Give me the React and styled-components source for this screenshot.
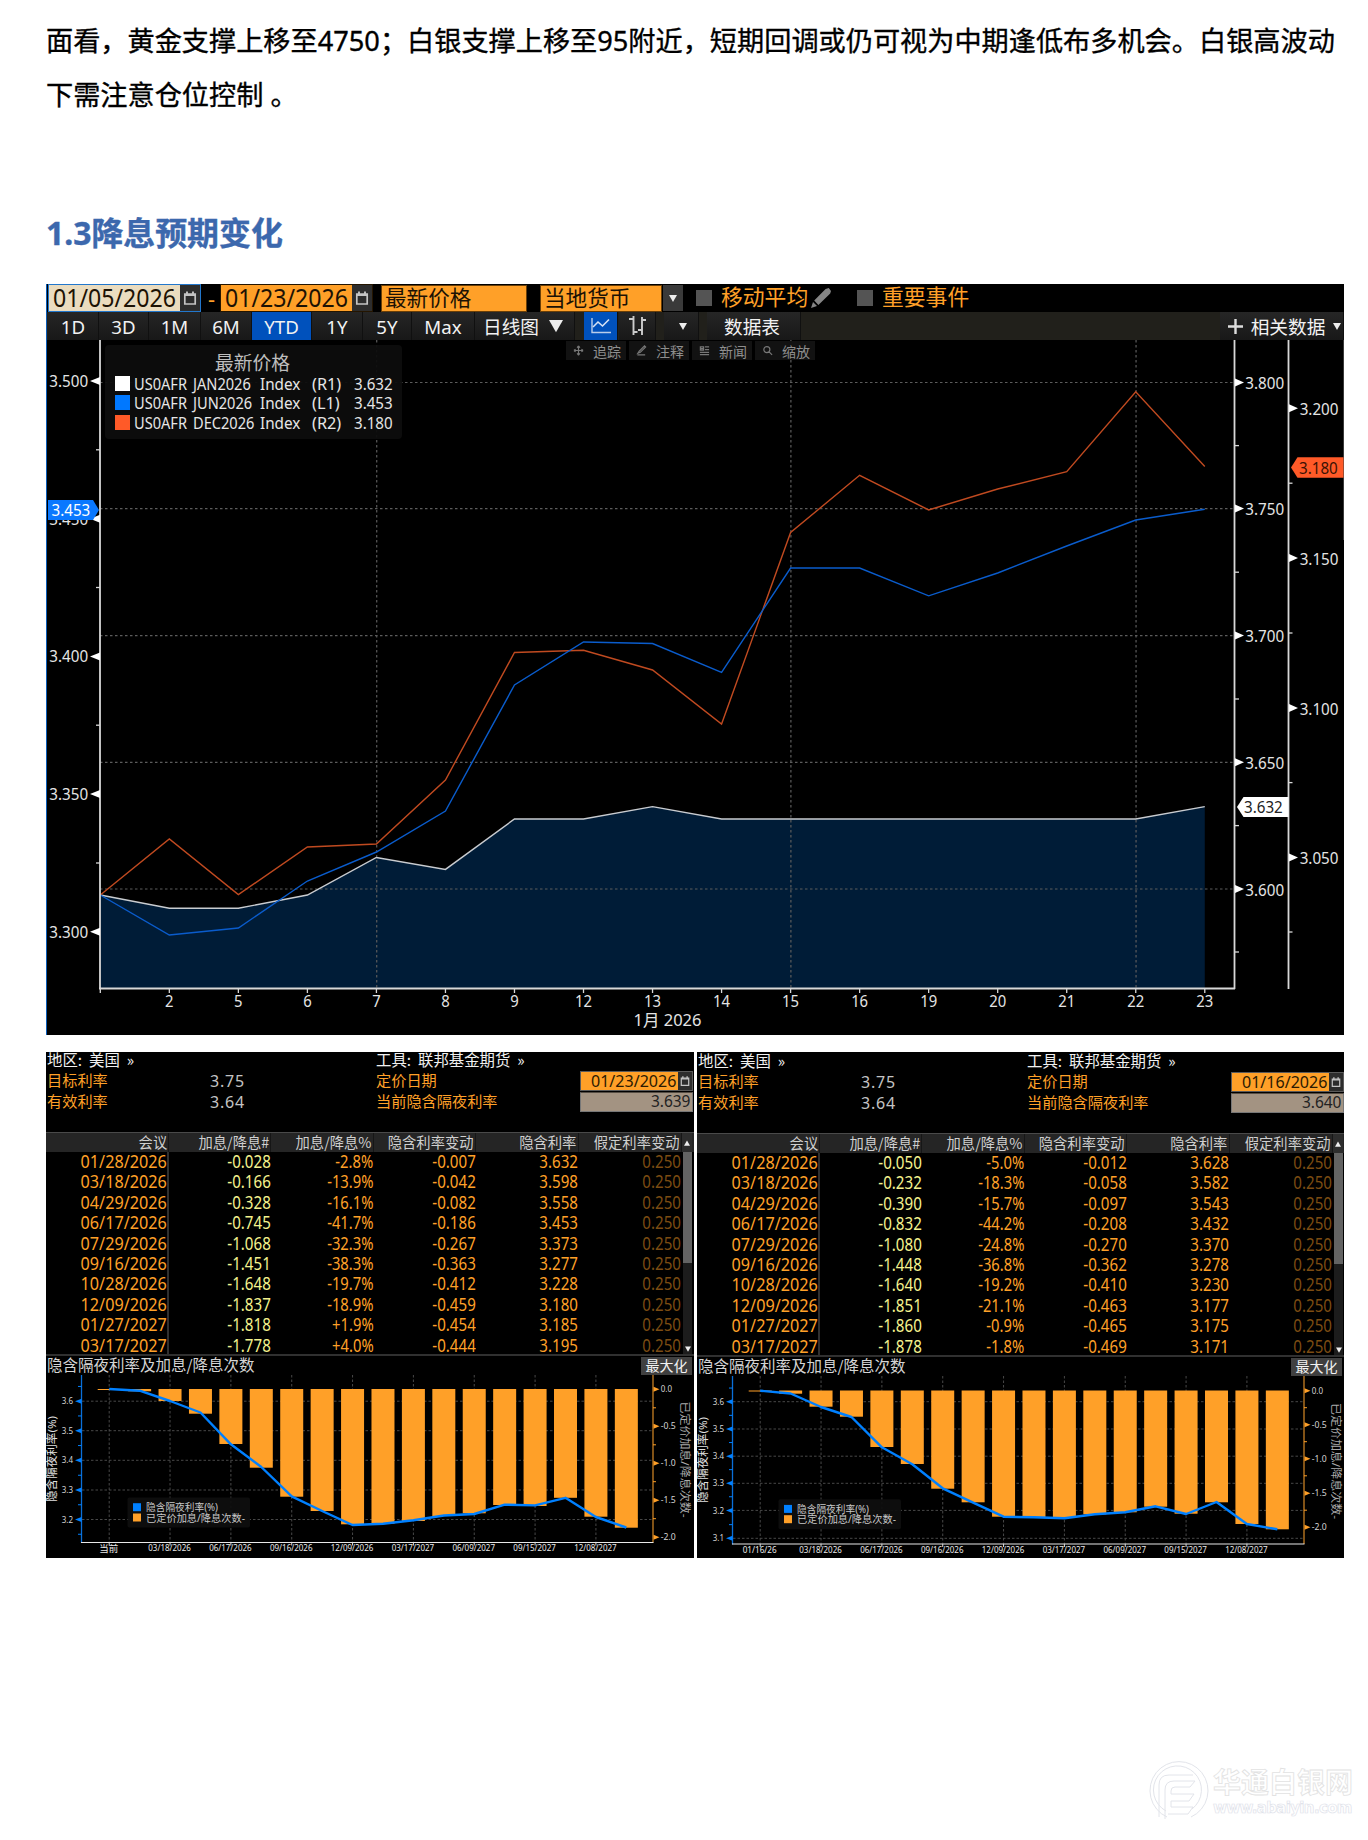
import React from "react";
import styled, { createGlobalStyle } from "styled-components";

const AMBER = "#ffa028";
const BLUE = "#0080ff";
const sans = `"Noto Sans", "Noto Sans CJK SC", sans-serif`;
const cjk = `"Noto Sans CJK SC", "Noto Sans", sans-serif`;

const GlobalStyle = createGlobalStyle`
  * { box-sizing: border-box; }
  body { margin: 0; background: #fff; font-family: ${sans}; }
  svg { display: block; flex: none; }
`;

const Page = styled.main`
  display: flex;
  flex-direction: column;
  width: 1368px;
  height: 1840px;
  padding: 14px 24px 17px 46px;
  overflow: hidden;
`;

const Paragraph = styled.p`
  margin: 0;
  height: 108px;
  font: 27.18px/54px ${sans};
  color: #000;
  -webkit-text-stroke: 0.35px #000;
  white-space: nowrap;
`;

const Heading = styled.h2`
  margin: 89px 0 0;
  height: 73px;
  font: 700 31.9px/44px ${sans};
  color: #3c68ad;
  -webkit-text-stroke: 0.4px #3c68ad;
  white-space: nowrap;
`;

/* ---------- price terminal ---------- */

const Terminal = styled.section`
  display: flex;
  flex-direction: column;
  width: 1298px;
  height: 751px;
  background: #000;
  border-left: 1px solid #0a5cb8;
`;

const FieldBar = styled.div`
  display: flex;
  align-items: center;
  height: 28px;
  padding-left: 1px;
`;

const DateField = styled.div`
  display: flex;
  align-items: center;
  height: 28px;
  border: 1px solid ${(p) => (p.$active ? "#2277cc" : "#241500")};
  color: #1c1204;
`;

const DateValue = styled.span`
  display: flex;
  justify-content: center;
  width: 131px;
  height: 26px;
  background: ${(p) => (p.$active ? "#eadcbf" : AMBER)};
  font: 25px/25px ${sans};
`;

const Squeeze = styled.span`
  display: inline-block;
  transform: scaleX(${(p) => p.$x});
  transform-origin: ${(p) => p.$from || "center"};
  white-space: nowrap;
`;

const CalendarCell = styled.span`
  display: grid;
  place-items: center;
  width: ${(p) => p.$w || 20}px;
  height: 100%;
  background: #2d2d2d;
`;

const Dash = styled.span`
  width: 19px;
  padding-left: 2px;
  text-align: center;
  color: ${AMBER};
  font: 22px/24px ${sans};
`;

const SelectField = styled.div`
  width: ${(p) => p.$w}px;
  height: 27px;
  margin-left: ${(p) => p.$gap}px;
  padding-left: 3px;
  border: 1px solid #6a3f08;
  background: ${AMBER};
  color: #1c1204;
  font: 21.6px/22px ${cjk};
`;

const DropCell = styled.span`
  display: grid;
  place-items: center;
  width: 20px;
  height: 26px;
  margin-left: 1px;
  background: #3a3a3a;
`;

const CheckBox = styled.span`
  width: 16px;
  height: 16px;
  margin-left: ${(p) => p.$gap}px;
  background: #545454;
`;

const CheckLabel = styled.span`
  width: 90px;
  height: 28px;
  margin-left: 9px;
  color: ${AMBER};
  font: 21.8px/24px ${cjk};
  white-space: nowrap;
`;

const RangeBar = styled.div`
  display: flex;
  height: 28px;
  padding-left: 1px;
  background: #21201b;
`;

const RangeButton = styled.span`
  display: flex;
  align-items: center;
  justify-content: center;
  gap: ${(p) => p.$gap || 0}px;
  width: ${(p) => p.$w}px;
  margin-left: ${(p) => p.$ml || 0}px;
  padding-left: ${(p) => p.$pl || 0}px;
  padding-right: ${(p) => p.$pr || 0}px;
  border-right: 1px solid #101010;
  background: ${(p) => (p.$on ? "#0051bc" : "linear-gradient(#262626, #181818)")};
  color: #f2f2f2;
  font: 18.7px/27px ${sans};
  white-space: nowrap;
`;

const Spring = styled.span`
  flex: 1;
`;

const ChartArea = styled.div`
  position: relative;
  height: 695px;
  margin-left: -1px;
`;

const ToolStrip = styled.div`
  position: absolute;
  top: 1px;
  left: 520px;
  display: flex;
  gap: 3px;
`;

const ToolChip = styled.span`
  display: flex;
  align-items: center;
  gap: 9px;
  width: 60px;
  height: 19px;
  padding-left: 7px;
  background: #121212;
  color: #8e8e8e;
  font: 14px/18px ${cjk};
`;

const LegendCard = styled.div`
  position: absolute;
  top: 5px;
  left: 59px;
  width: 297px;
  height: 94px;
  padding: 7px 9px 7px 10px;
  border-radius: 4px;
  background: rgba(13, 13, 13, 0.94);
  color: #e6e6e6;
`;

const LegendTitle = styled.div`
  height: 22px;
  padding-left: 100px;
  color: #bdbdbd;
  font: 18.8px/20px ${cjk};
`;

const LegendRow = styled.div`
  display: grid;
  grid-template-columns: 19px 59px 67px 52px 42px 40px;
  align-items: center;
  height: 19.3px;
  font: 16.6px/19px ${sans};
  white-space: nowrap;
`;

const Swatch = styled.i`
  width: 15px;
  height: 15px;
  background: ${(p) => p.$c};
`;

/* ---------- probability panels ---------- */

const PanelRow = styled.section`
  display: flex;
  gap: 3px;
  margin-top: 17px;
`;

const Panel = styled.article`
  width: ${(p) => p.$w}px;
  height: 506px;
  padding-top: ${(p) => p.$top}px;
  background: #000;
  overflow: hidden;
`;

const InfoGrid = styled.div`
  display: grid;
  grid-template-columns: 163px 166px 204px 114px;
  grid-template-rows: 19px 20px 21px;
  align-items: center;
  height: 80px;
  padding-left: 1px;
  color: ${AMBER};
  font: 15.2px/15px ${cjk};
  white-space: nowrap;
`;

const InfoText = styled.span`
  height: 18px;
`;

const Plain = styled.span`
  height: 19px;
  color: #f0f0f0;
  font-size: 15.4px;
  word-spacing: 3.5px;
`;

const Rate = styled.span`
  color: #c4c4c4;
  font: 16px/18px ${sans};
  letter-spacing: 0.8px;
`;

const PriceDate = styled.div`
  display: flex;
  width: 113px;
  height: 20px;
  border: 1px solid #5a5a5a;
  background: #2d2d2d;
`;

const PriceDateValue = styled.span`
  display: flex;
  justify-content: flex-end;
  width: 97px;
  padding-right: 2px;
  background: ${AMBER};
  color: #2b1a02;
  font: 17px/17px ${sans};
`;

const RateBox = styled.span`
  width: 113px;
  height: 20px;
  padding-right: 2px;
  border: 1px solid #777;
  border-top-color: #554d44;
  background: #a39382;
  color: #222;
  font: 17px/15px ${sans};
  text-align: right;
`;

const columns = "123px 102px 102.5px 102.5px 102.5px 103px 11px";

const HeadRow = styled.div`
  display: grid;
  grid-template-columns: ${columns};
  height: 20px;
  border-top: 1px solid #4a4a4a;
  background: #252525;
  color: #cfcfcf;
  font: 14.6px/17px ${cjk};
  text-align: right;
  white-space: nowrap;
`;

const HeadCell = styled.span`
  display: block;
  padding-right: 1px;
  border-right: 1px solid #161616;
`;

const TableBody = styled.div`
  display: flex;
  height: 204px;
  border-bottom: 2px solid #303030;
`;

const Rows = styled.div`
  width: 636px;
`;

const Row = styled.div`
  display: grid;
  grid-template-columns: 123px 102px 102.5px 102.5px 102.5px 103px;
  height: 20.4px;
  font: 18px/19px ${sans};
  text-align: right;
  white-space: nowrap;
`;

const Cell = styled.span`
  color: ${(p) => p.$c || AMBER};
  border-right: ${(p) => (p.$rule ? "2px solid #303030" : "0")};
`;

const Scroll = styled.div`
  display: flex;
  flex-direction: column;
  justify-content: space-between;
  align-items: center;
  width: 9px;
  margin-left: 1px;
  background: #1c1c1c;
`;

const Thumb = styled.i`
  width: 9px;
  height: 111px;
  background: #636363;
`;

const ChartTitle = styled.div`
  display: flex;
  justify-content: space-between;
  height: 19px;
  padding: 1px 2px 0 1px;
  color: #d4d4d4;
  font: 15.5px/15px ${cjk};
  white-space: nowrap;
`;

const MaxButton = styled.span`
  width: 51px;
  height: 18px;
  background: #404040;
  color: #f2f2f2;
  font: 14px/16px ${cjk};
  text-align: center;
`;

/* ---------- watermark ---------- */

const Watermark = styled.footer`
  display: flex;
  align-items: center;
  gap: 3px;
  margin-top: auto;
  margin-left: 1102px;
`;

const MarkName = styled.div`
  height: 34px;
  font: 700 28px/30px ${cjk};
  color: #fff;
  -webkit-text-stroke: 0.8px #e2e2e2;
  white-space: nowrap;
`;

const MarkUrl = styled.div`
  font: 700 15px/16px "DejaVu Sans", sans-serif;
  color: #fff;
  -webkit-text-stroke: 0.7px #e0e2ea;
  white-space: nowrap;
  letter-spacing: -0.65px;
`;

/* ---------- icons ---------- */

const Calendar = ({ s = 14 }) => (
  <svg width={s} height={s} viewBox="0 0 14 14">
    <path d="M1.8 3h10.4v10H1.8z" fill="none" stroke="#c4c4c4" strokeWidth="1.7" />
    <path d="M1.5 4h11M4 0.5v4M10 0.5v4" stroke="#c4c4c4" strokeWidth="1.9" />
  </svg>
);

const Down = ({ w = 8, h = 7 }) => (
  <svg width={w} height={h} viewBox="0 0 8 7"><path d="M0 0h8L4 7z" fill="#eee" /></svg>
);

const Up = () => (
  <svg width="6" height="6" viewBox="0 0 8 7"><path d="M0 7h8L4 0z" fill="#eee" /></svg>
);

const Pencil = () => (
  <svg width="20" height="20" viewBox="0 0 20 20">
    <path d="M0 20l2-6 4 4zM3.2 12.6L14.6 1l3.2-1L20 3l-.8 2.6L7.4 17z" fill="#858585" />
  </svg>
);

const LineIcon = () => (
  <svg width="20" height="16" viewBox="0 0 20 16">
    <path d="M1 0v14.5h19" fill="none" stroke="#b9cdea" strokeWidth="1.4" />
    <path d="M2 9l5-5 4.5 4L18 1.500" fill="none" stroke="#d5e2f5" strokeWidth="1.6" />
  </svg>
);

const BarIcon = () => (
  <svg width="17" height="20" viewBox="0 0 17 20">
    <path d="M4.500 0v19M0 3h4.500M4.500 16h4M13 1v18M9 14h4M13 4h4" fill="none" stroke="#ccc" strokeWidth="1.9" />
  </svg>
);

const Plus = () => (
  <svg width="15" height="15" viewBox="0 0 15 15">
    <path d="M7.500 0v15M0 7.500h15" stroke="#ddd" strokeWidth="2.4" />
  </svg>
);

const toolPaths = {
  追踪: <path d="M6 1v10M1 6h10M6 1L4.500 2.800M6 1l1.500 1.800M6 11l-1.500-1.800M6 11l1.500-1.800M1 6l1.800-1.500M1 6l1.800 1.500M11 6L9.200 4.500M11 6L9.200 7.500" />,
  注释: <path d="M1.500 10.700H10M2 9l1.500-2.200L9.300 1l1.200 1.200-5.800 5.800z" />,
  新闻: <path d="M1.500 2h3.500v3.500H1.500zM2 4h3M6.500 2h4.500M6.500 5h4.500M1 8h10M1 10.500h10" />,
  缩放: <path d="M8.600 5a3.300 3.300 0 1 1-6.600 0a3.300 3.300 0 1 1 6.600 0M7.800 7.500L11 10.800" />,
};

/* ---------- main chart ---------- */

const days = ["", "2", "5", "6", "7", "8", "9", "12", "13", "14", "15", "16", "19", "20", "21", "22", "23"];
const dayX = (i) => 100.3 + i * 69.03;
const redY = [895, 839, 894.6, 847, 844, 780, 652.5, 650.3, 670, 724, 532.5, 475.3, 510, 489, 471.7, 391.8, 466.5];
const blueY = [895, 935, 928, 881, 852, 811, 685, 642, 643.5, 672.3, 568, 568, 595.8, 573, 546, 520, 509.2];
const whiteY = [895, 908.3, 908.3, 895, 857.5, 869.4, 819, 819, 806.6, 819, 819, 819, 819, 819, 819, 819, 806.6];
const toPoints = (ys, x) => ys.map((y, i) => `${x(i)},${y}`).join(" ");

const l1 = [["3.500", 381], ["3.450", 518.7], ["3.400", 656.4], ["3.350", 794.1], ["3.300", 931.8]];
const r1 = [["3.800", 382.5], ["3.750", 508.6], ["3.700", 635.6], ["3.650", 762.3], ["3.600", 889]];
const r2 = [["3.200", 408.3], ["3.150", 558], ["3.100", 708], ["3.050", 857.6]];

const Label = ({ x, y, len = 38.8, size = 16.8, fill = "#e4e4e4", anchor = "start", children }) => (
  <text x={x} y={y + size * 0.35} fontSize={size} fontFamily="Noto Sans, Noto Sans CJK SC, sans-serif" fill={fill} textAnchor={anchor} textLength={len || undefined} lengthAdjust="spacingAndGlyphs">
    {children}
  </text>
);

function PriceChart() {
  return (
    <svg width="1298" height="695" viewBox="46 340 1298 695">
      <polygon points={`100.500,988 ${toPoints(whiteY, dayX)} ${dayX(16)},988`} fill="#001c37" />
      <g stroke="#5c5c5c" strokeWidth="1.200" strokeDasharray="2.500 2.500">
        {r1.map(([t, y]) => <path key={t} d={`M100 ${y}H1234`} />)}
        {[4, 10, 15].map((i) => <path key={i} d={`M${dayX(i) + 0.3} 340V988`} />)}
      </g>
      <g fill="none" strokeWidth="1.400">
        <polyline points={toPoints(whiteY, dayX)} stroke="#c9ccd0" />
        <polyline points={toPoints(redY, dayX)} stroke="#c04a20" />
        <polyline points={toPoints(blueY, dayX)} stroke="#0a5ccc" />
      </g>
      <g stroke="#d8d8d8" strokeWidth="1.800" fill="none">
        <path d="M100 340V989M1234.500 340V989M1288.500 340V989M99 988.500H1235" />
      </g>
      <path d="M1343.500 340V540" stroke="#3a3a3a" />
      <g stroke="#d8d8d8" strokeWidth="1.300">
        {[449.8, 587.5, 725.2, 863].map((y) => <path key={y} d={`M96 ${y}h4`} />)}
        {[445.6, 572.2, 699, 825.6, 952].map((y) => <path key={y} d={`M1234 ${y}h5`} />)}
        {[483.2, 633, 782.6, 932].map((y) => <path key={y} d={`M1288 ${y}h4.500`} />)}
        {days.map((d, i) => <path key={i} d={`M${dayX(i)} 988v5`} />)}
      </g>
      <g fill="#fff">
        {l1.map(([t, y]) => <path key={t} d={`M100 ${y - 4}v8L90 ${y}z`} />)}
        {r1.map(([t, y]) => <path key={t} d={`M1235 ${y - 4}v8L1244 ${y}z`} />)}
        {r2.map(([t, y]) => <path key={t} d={`M1289 ${y - 4}v8L1298 ${y}z`} />)}
      </g>
      {l1.map(([t, y]) => <Label key={t} x={49.300} y={y}>{t}</Label>)}
      {r1.map(([t, y]) => <Label key={t} x={1245.300} y={y + 0.700}>{t}</Label>)}
      {r2.map(([t, y]) => <Label key={t} x={1299.700} y={y + 0.700}>{t}</Label>)}
      {days.map((d, i) => (
        <Label key={i} x={dayX(i)} y={1001} len={d.length * 8.5} anchor="middle" size={16.200}>{d}</Label>
      ))}
      <Label x={667.500} y={1020} len={68} anchor="middle" size={16}>1月 2026</Label>
      <path d="M48 500h45l6 10-6 10H48z" fill="#0a78ff" />
      <Label x={51.500} y={510} fill="#fff">3.453</Label>
      <path d="M1343.500 457.300h-46l-6.500 10.200 6.500 10.200h46z" fill="#ff5a28" />
      <Label x={1299} y={468} fill="#3b1204">3.180</Label>
      <path d="M1288.500 797h-45l-6.500 10 6.500 10h45z" fill="#fff" />
      <Label x={1244} y={807} fill="#222">3.632</Label>
    </svg>
  );
}

const legend = [
  ["#ffffff", "JAN2026", "(R1)", "3.632"],
  ["#0078ff", "JUN2026", "(L1)", "3.453"],
  ["#ff5a28", "DEC2026", "(R2)", "3.180"],
];

/* ---------- panels data ---------- */

const meetings = ["01/28/2026", "03/18/2026", "04/29/2026", "06/17/2026", "07/29/2026", "09/16/2026", "10/28/2026", "12/09/2026", "01/27/2027", "03/17/2027"];

const leftPanel = {
  x0: 46, w: 648, top: 0, date: "01/23/2026", implied: "3.639",
  rows: [
    ["-0.028", "-2.8%", "-0.007", "3.632"], ["-0.166", "-13.9%", "-0.042", "3.598"],
    ["-0.328", "-16.1%", "-0.082", "3.558"], ["-0.745", "-41.7%", "-0.186", "3.453"],
    ["-1.068", "-32.3%", "-0.267", "3.373"], ["-1.451", "-38.3%", "-0.363", "3.277"],
    ["-1.648", "-19.7%", "-0.412", "3.228"], ["-1.837", "-18.9%", "-0.459", "3.180"],
    ["-1.818", "+1.9%", "-0.454", "3.185"], ["-1.778", "+4.0%", "-0.444", "3.195"],
  ],
  first: "当前", base: 1542.5, zero: 1389,
  left: [["3.6", 1401.2], ["3.5", 1430.7], ["3.4", 1460.3], ["3.3", 1490], ["3.2", 1519.5]],
  right: [["0.0", 1389.3], ["-0.5", 1426.3], ["-1.0", 1463.2], ["-1.5", 1500.2], ["-2.0", 1537.3]],
  bars: [1390, 1391.3, 1401, 1413.7, 1444, 1467.7, 1496.7, 1511, 1524.3, 1523.7, 1521, 1516, 1513.3, 1505, 1506, 1497.8, 1516.7, 1527.7],
  line: [1389, 1390.7, 1401, 1412.5, 1444.3, 1467, 1496.3, 1511, 1525, 1523.7, 1520.3, 1515.5, 1514, 1504.7, 1505.4, 1497.8, 1517, 1527.5],
  boxY: 1497.5,
};

const rightPanel = {
  x0: 697, w: 647, top: 1, date: "01/16/2026", implied: "3.640",
  rows: [
    ["-0.050", "-5.0%", "-0.012", "3.628"], ["-0.232", "-18.3%", "-0.058", "3.582"],
    ["-0.390", "-15.7%", "-0.097", "3.543"], ["-0.832", "-44.2%", "-0.208", "3.432"],
    ["-1.080", "-24.8%", "-0.270", "3.370"], ["-1.448", "-36.8%", "-0.362", "3.278"],
    ["-1.640", "-19.2%", "-0.410", "3.230"], ["-1.851", "-21.1%", "-0.463", "3.177"],
    ["-1.860", "-0.9%", "-0.465", "3.175"], ["-1.878", "-1.8%", "-0.469", "3.171"],
  ],
  first: "01/16/26", base: 1544, zero: 1390.5,
  left: [["3.6", 1401.7], ["3.5", 1429], ["3.4", 1456.2], ["3.3", 1483.3], ["3.2", 1510.4], ["3.1", 1538.3]],
  right: [["0.0", 1390.7], ["-0.5", 1424.7], ["-1.0", 1458.8], ["-1.5", 1493.2], ["-2.0", 1527.3]],
  bars: [1391.5, 1393.7, 1406.7, 1416.7, 1447, 1464, 1488.7, 1502.3, 1516.7, 1517, 1517.7, 1514.3, 1512.3, 1506.7, 1513.7, 1502.3, 1524, 1529.3],
  line: [1390.7, 1393.5, 1407, 1417, 1447.3, 1464.3, 1488.3, 1502.7, 1516.7, 1517.3, 1518.3, 1514.3, 1512.3, 1506.3, 1514, 1502, 1524, 1529.3],
  boxY: 1499.2,
};

const axisDates = ["03/18/2026", "06/17/2026", "09/16/2026", "12/09/2026", "03/17/2027", "06/09/2027", "09/15/2027", "12/08/2027"];

function RateChart({ d }) {
  const bx = (i) => 63.2 + i * 30.42;
  const h = 183 - d.top;
  const dates = [d.first, ...axisDates];
  const half = (d.left[1][1] - d.left[0][1]) / 2;
  const halfR = (d.right[1][1] - d.right[0][1]) / 2;
  return (
    <svg width={d.w} height={h} viewBox={`0 ${1375 + d.top} ${d.w} ${h}`}>
      <g stroke="#484848" strokeWidth="1" strokeDasharray="2.500 2">
        {d.left.map(([t, y]) => <path key={t} d={`M36 ${y}H607`} />)}
        {dates.map((t, i) => <path key={t} d={`M${bx(i * 2)} ${1375 + d.top}V${d.base}`} />)}
      </g>
      {d.bars.map((y, i) => (
        <rect key={i} x={bx(i) - 11.500} y={d.zero} width="23" height={Math.max(y - d.zero, 0.8)} fill={AMBER} />
      ))}
      <rect x="81.500" y={d.boxY} width="122.500" height="30" rx="2" fill="#0e0e0e" fillOpacity="0.930" />
      <rect x="87" y={d.boxY + 5.700} width="8" height="8" fill={BLUE} />
      <rect x="87" y={d.boxY + 16} width="8" height="8" fill={AMBER} />
      <Label x={100} y={d.boxY + 10.200} size={10} len={72} fill="#c8c8c8">隐含隔夜利率(%)</Label>
      <Label x={100} y={d.boxY + 20.600} size={10} len={99} fill="#c8c8c8">已定价加息/降息次数-</Label>
      <polyline points={toPoints(d.line, bx)} fill="none" stroke={BLUE} strokeWidth="2.400" strokeLinejoin="round" />
      <path d={`M35.500 ${1375 + d.top}V${d.base + 0.5}`} stroke="#0a6fd8" strokeWidth="1.300" />
      <path d={`M607 ${1375 + d.top}V${d.base}`} stroke="#d98a25" strokeWidth="1.200" />
      <path d={`M35 ${d.base}H607.500`} stroke="#e8e8e8" strokeWidth="1.200" />
      {dates.map((t, i) => <path key={t} d={`M${bx(i * 2)} ${d.base}v3`} stroke="#ddd" />)}
      {d.left.map(([t, y], i) => (
        <g key={t}>
          <path d={`M35.500 ${y - 2.500}v5L29 ${y}z`} fill={BLUE} />
          <path d={`M32 ${y - half}h3.500${i === d.left.length - 1 && !d.top ? `M32 ${y + half}h3.500` : ""}`} stroke={BLUE} />
          <Label x={15.800} y={y} size={9} len={11.300} fill="#d4d4d4">{t}</Label>
        </g>
      ))}
      {d.right.map(([t, y], i) => (
        <g key={t}>
          <path d={`M607.500 ${y - 2.500}v5L613.500 ${y}z`} fill={AMBER} />
          {i < 4 && <path d={`M607 ${y + halfR}h3`} stroke={AMBER} />}
          <Label x={614.800} y={y} size={9} len={t[0] === "-" ? 15 : 11.300} fill="#d4d4d4">{t}</Label>
        </g>
      ))}
      {dates.map((t, i) => (
        <Label key={t} x={bx(i * 2) - 0.5} y={d.base + 6} size={i || d.top ? 8.4 : 9.500} len={i ? 42.500 : d.top ? 34 : 19} anchor="middle" fill="#eaeaea">{t}</Label>
      ))}
      <g transform={`translate(5.500 ${1459 + d.top}) rotate(-90)`}>
        <Label x={0} y={0} size={11.500} len={86} anchor="middle" fill="#e0e0e0">隐含隔夜利率(%)</Label>
      </g>
      <g transform={`translate(639 ${1459.500 + d.top * 1.5}) rotate(90)`}>
        <Label x={0} y={0} size={11} len={116} anchor="middle" fill="#aaa">已定价加息/降息次数-</Label>
      </g>
    </svg>
  );
}

function RatePanel({ d }) {
  return (
    <Panel $w={d.w} $top={d.top}>
      <InfoGrid>
        <Plain>地区: 美国 »</Plain><span /><Plain>工具: 联邦基金期货 »</Plain><span />
        <InfoText>目标利率</InfoText><Rate>3.75</Rate><InfoText>定价日期</InfoText>
        <PriceDate>
          <PriceDateValue><Squeeze $x={0.945} $from="right">{d.date}</Squeeze></PriceDateValue>
          <CalendarCell $w={14}><Calendar s={10} /></CalendarCell>
        </PriceDate>
        <InfoText>有效利率</InfoText><Rate>3.64</Rate><InfoText>当前隐含隔夜利率</InfoText>
        <RateBox><Squeeze $x={0.91} $from="right">{d.implied}</Squeeze></RateBox>
      </InfoGrid>
      <HeadRow>
        {["会议", "加息/降息#", "加息/降息%", "隐含利率变动", "隐含利率", "假定利率变动"].map((t) => (
          <HeadCell key={t}><Squeeze $x={0.98} $from="right">{t}</Squeeze></HeadCell>
        ))}
        <CalendarCell $w={10}><Up /></CalendarCell>
      </HeadRow>
      <TableBody>
        <Rows>
          {d.rows.map((r, i) => (
            <Row key={meetings[i]}>
              <Cell $rule><Squeeze $x={0.9} $from="right">{meetings[i]}</Squeeze></Cell>
              {r.map((v, j) => (
                <Cell key={j} $c={j ? AMBER : "#f4f28e"}><Squeeze $x={j === 1 ? 0.82 : 0.84} $from="right">{v}</Squeeze></Cell>
              ))}
              <Cell $c="#7c4c12"><Squeeze $x={0.84} $from="right">0.250</Squeeze></Cell>
            </Row>
          ))}
        </Rows>
        <Scroll><Thumb /><Down w={6} h={10} /></Scroll>
      </TableBody>
      <ChartTitle><span>隐含隔夜利率及加息/降息次数</span><MaxButton>最大化</MaxButton></ChartTitle>
      <RateChart d={d} />
    </Panel>
  );
}

const ranges = [["1D", 51], ["3D", 50], ["1M", 52], ["6M", 51], ["YTD", 60, true], ["1Y", 51], ["5Y", 49], ["Max", 63]];

export default function App() {
  return (
    <Page>
      <GlobalStyle />
      <Paragraph>
        面看，黄金支撑上移至4750；白银支撑上移至95附近，短期回调或仍可视为中期逢低布多机会。白银高波动
        <br />
        下需注意仓位控制 。
      </Paragraph>
      <Heading>1.3降息预期变化</Heading>

      <Terminal>
        <FieldBar>
          <DateField $active>
            <DateValue $active><Squeeze $x={0.925}>01/05/2026</Squeeze></DateValue>
            <CalendarCell><Calendar /></CalendarCell>
          </DateField>
          <Dash>-</Dash>
          <DateField>
            <DateValue><Squeeze $x={0.925}>01/23/2026</Squeeze></DateValue>
            <CalendarCell><Calendar /></CalendarCell>
          </DateField>
          <SelectField $w={146} $gap={8}>最新价格</SelectField>
          <SelectField $w={122} $gap={13}>当地货币</SelectField>
          <DropCell><Down /></DropCell>
          <CheckBox $gap={13} />
          <CheckLabel>移动平均</CheckLabel>
          <Pencil />
          <CheckBox $gap={26} />
          <CheckLabel>重要事件</CheckLabel>
        </FieldBar>
        <RangeBar>
          {ranges.map(([t, w, on]) => (
            <RangeButton key={t} $w={w} $on={on}>{t}</RangeButton>
          ))}
          <RangeButton $w={100} $gap={10} $pr={3}>日线图<Down w={14} h={14} /></RangeButton>
          <RangeButton $w={34} $ml={9} $on><LineIcon /></RangeButton>
          <RangeButton $w={37} $ml={1}><BarIcon /></RangeButton>
          <RangeButton $w={35} $ml={8} $pl={4}><Down /></RangeButton>
          <RangeButton $w={94} $ml={8} $pr={3}>数据表</RangeButton>
          <Spring />
          <RangeButton $w={124} $gap={8} $pl={6}><Plus />相关数据<Down /></RangeButton>
        </RangeBar>
        <ChartArea>
          <PriceChart />
          <ToolStrip>
            {Object.keys(toolPaths).map((t) => (
              <ToolChip key={t}>
                <svg width="11" height="11" viewBox="0 0 12 12" fill="none" stroke="#777" strokeWidth="1.300">{toolPaths[t]}</svg>
                {t}
              </ToolChip>
            ))}
          </ToolStrip>
          <LegendCard>
            <LegendTitle>最新价格</LegendTitle>
            {legend.map(([c, month, axis, value]) => (
              <LegendRow key={month}>
                <Swatch $c={c} />
                <Squeeze $x={0.88} $from="left">US0AFR</Squeeze>
                <Squeeze $x={0.88} $from="left">{month}</Squeeze>
                <Squeeze $x={0.92} $from="left">Index</Squeeze>
                <Squeeze $x={0.98} $from="left">{axis}</Squeeze>
                <Squeeze $x={0.91} $from="left">{value}</Squeeze>
              </LegendRow>
            ))}
          </LegendCard>
        </ChartArea>
      </Terminal>

      <PanelRow>
        <RatePanel d={leftPanel} />
        <RatePanel d={rightPanel} />
      </PanelRow>

      <Watermark>
        <svg width="62" height="64" viewBox="0 0 62 64" fill="none" stroke="#e2e4ea" strokeWidth="1">
          <path d="M19 58A29 29 0 1 1 43 58M18 52A24 24 0 1 1 44 50" />
          <path d="M11 58V26q0-10 10-10h24M17 60V31q0-9 9-9h21l-5 6H27q-4 0-4 4v3h23l-5 7H23v6h22l-5 7H20" />
        </svg>
        <div>
          <MarkName>华通白银网</MarkName>
          <MarkUrl>www.abaiyin.com</MarkUrl>
        </div>
      </Watermark>
    </Page>
  );
}
